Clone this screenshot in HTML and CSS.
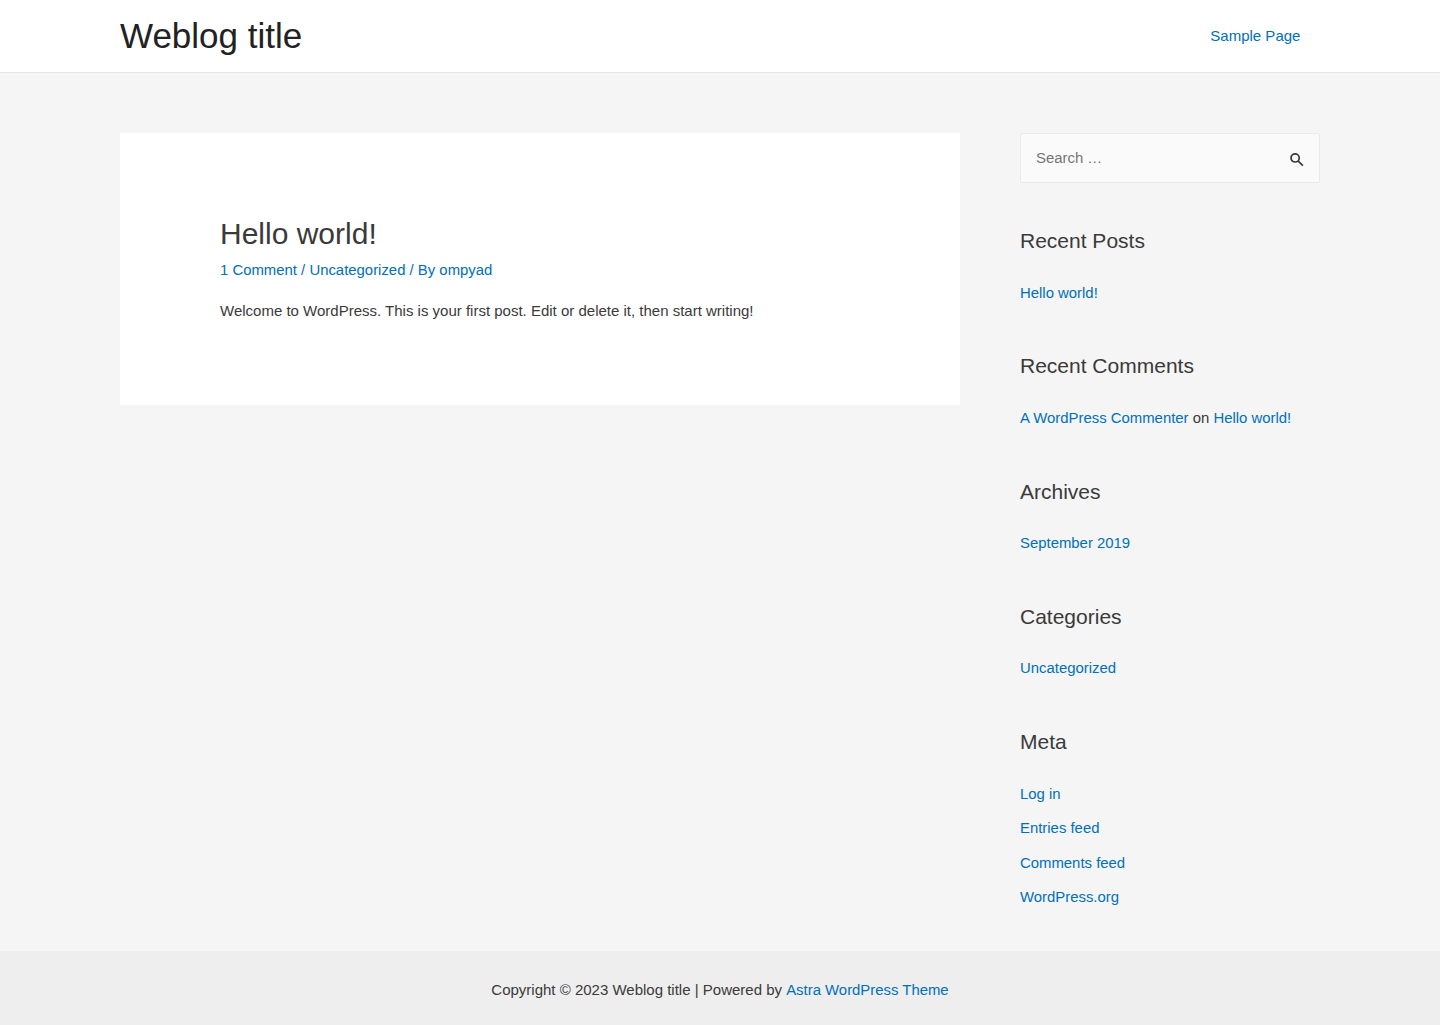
FILE: index.html
```html
<!DOCTYPE html>
<html lang="en">
<head>
<meta charset="utf-8">
<title>Weblog title</title>
<link rel="stylesheet" href="styles.css">
</head>
<body>
<header class="site-header">
  <div class="container header-inner">
    <p class="site-title"><a href="#">Weblog title</a></p>
    <nav class="main-nav"><a href="#">Sample Page</a></nav>
  </div>
</header>
<div class="container content">
  <main class="primary">
    <article class="post">
      <h2 class="entry-title">Hello world!</h2>
      <div class="entry-meta"><a href="#">1 Comment</a> / <a href="#">Uncategorized</a> / By <a href="#">ompyad</a></div>
      <p class="entry-text">Welcome to WordPress. This is your first post. Edit or delete it, then start writing!</p>
    </article>
  </main>
  <aside class="sidebar">
    <form class="search-form">
      <input class="search-field" type="search" placeholder="Search …" aria-label="Search">
      <svg class="search-icon" viewBox="0 0 14 14" width="14" height="14"><circle cx="5.1" cy="4.9" r="4.1" fill="none" stroke="currentColor" stroke-width="1.7"/><path d="M8 7.8L12.9 12.7" stroke="currentColor" stroke-width="1.7"/></svg>
    </form>
    <section class="widget"><h2 class="widget-title">Recent Posts</h2><ul class="widget-list"><li><a href="#">Hello world!</a></li></ul></section>
    <section class="widget"><h2 class="widget-title">Recent Comments</h2><ul class="widget-list"><li><a href="#">A WordPress Commenter</a> on <a href="#">Hello world!</a></li></ul></section>
    <section class="widget"><h2 class="widget-title">Archives</h2><ul class="widget-list"><li><a href="#">September 2019</a></li></ul></section>
    <section class="widget"><h2 class="widget-title">Categories</h2><ul class="widget-list"><li><a href="#">Uncategorized</a></li></ul></section>
    <section class="widget"><h2 class="widget-title">Meta</h2><ul class="widget-list"><li><a href="#">Log in</a></li><li><a href="#">Entries feed</a></li><li><a href="#">Comments feed</a></li><li><a href="#">WordPress.org</a></li></ul></section>
  </aside>
</div>
<footer class="site-footer">
  <p>Copyright © 2023 Weblog title | Powered by <a href="#">Astra WordPress Theme</a></p>
</footer>
</body>
</html>
```

FILE: styles.css
```css
* { box-sizing: border-box; }
body {
  margin: 0;
  min-height: 1025px;
  display: flex;
  flex-direction: column;
  background: #f5f5f5;
  color: #3a3a3a;
  font: 15px/27.85px "Liberation Sans", Arial, sans-serif;
}
a { color: #0170b9; text-decoration: none; }
h2, p, ul { margin: 0; padding: 0; font-weight: 400; }
.container { width: 1200px; margin: 0 auto; }
.site-header { height: 73px; background: #fff; border-bottom: 1px solid #e6e6e6; }
.header-inner { height: 72px; display: flex; justify-content: space-between; align-items: center; }
.site-title { font-size: 35px; line-height: 42px; }
.site-title a { color: #222; }
.main-nav { padding-right: 19.6px; }
.content { flex: 1; display: flex; justify-content: space-between; align-items: flex-start; padding-top: 60px; }
.primary { width: 840px; }
.post { height: 272px; padding: 81px 100px 79px; background: #fff; }
.entry-title { font-size: 30px; line-height: 40px; }
.entry-meta { line-height: 24px; margin-top: 4px; color: #0170b9; font-size: 14.9px; }
.entry-text { margin-top: 15px; }
.sidebar { width: 300px; font-size: 14.9px; }
.search-form {
  height: 50px;
  padding: 0 15px;
  display: flex;
  align-items: center;
  background: #fafafa;
  border: 1px solid #eaeaea;
  border-radius: 2px;
}
.search-field { flex: 1; min-width: 0; padding: 2px 0 0; border: 0; outline: 0; background: transparent; font: inherit; }
.search-field::placeholder { color: #757575; opacity: 1; }
.search-icon { color: #3a3a3a; margin-top: 4px; }
.widget { margin-top: 42px; height: 83.2px; }
.search-form + .widget { margin-top: 42.15px; }
.widget-title { font-size: 21px; line-height: 32px; margin-bottom: 22.7px; }
.widget-list { list-style: none; }
.widget-list li { margin-bottom: 6.65px; }
.site-footer { height: 74px; background: #eee; display: flex; justify-content: center; align-items: center; padding-top: 5px; }
.site-footer a { font-size: 14.9px; }
```
